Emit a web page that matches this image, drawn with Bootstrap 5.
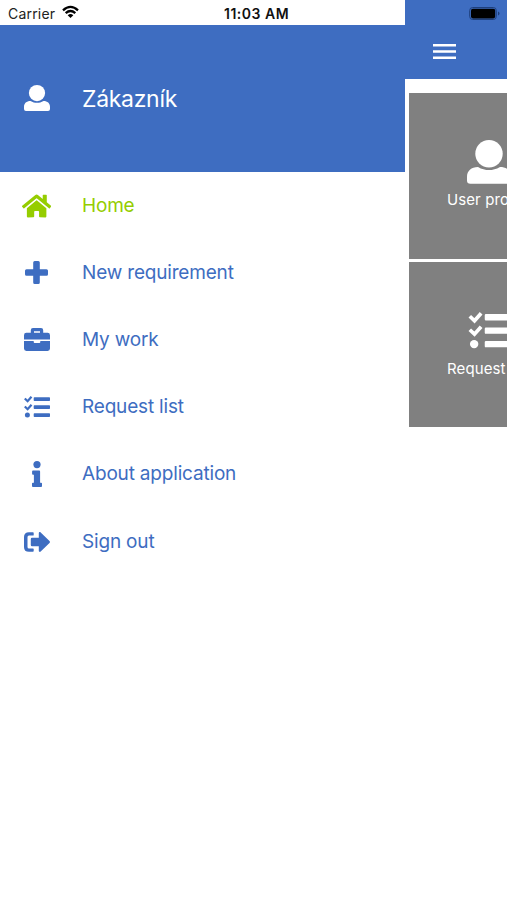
<!DOCTYPE html>
<html lang="en">
<head>
<meta charset="utf-8">
<meta name="viewport" content="width=device-width, initial-scale=1">
<title>Home</title>
<link href="https://cdn.jsdelivr.net/npm/bootstrap@5.3.0/dist/css/bootstrap.min.css" rel="stylesheet">
<style>
:root { --brand: #3e6dc1; --active: #95cd00; }
body { font-family: Inter, "Liberation Sans", sans-serif; background: #fff; }
svg { display: block; fill: currentColor; flex: none; }
.drawer { width: 405px; }
.status { height: 25px; padding: 4px 0 0 8px; font-size: 14px; line-height: 20px; color: #222; }
.clock { width: 66px; font-size: 14px; letter-spacing: .5px; margin-right: 115px; color: #111; }
.carrier { letter-spacing: .2px; }
.wifi { fill: none; margin: 1px 0 0 6px; }
.brand { background: var(--brand); }
.profile { height: 146.5px; padding-left: 22px; font-size: 23px; letter-spacing: -.3px; }
.profile-name { padding-top: 2px; }
.icon-slot { width: 29.5px; margin-right: 30.5px; display: flex; justify-content: center; }
.menu-row { height: 67.2px; padding: 1px 0 0 22px; font-size: 19px; line-height: 24px; letter-spacing: -.18px; color: var(--brand); text-decoration: none; }
.menu-row.current { color: var(--active); }
.topbar { height: 79px; }
.battery { padding: 7px 0 0 64px; height: 43px; }
.burger { margin-left: 28px; }
.tiles { padding: 14px 0 0 4px; gap: 3px; }
.tile { width: 160px; height: 165.5px; background: #808080; font-size: 15px; line-height: 20px; letter-spacing: .1px; padding-top: 47px; }
.tile-label { margin: 6px 0 0 38px; }
.tile svg { margin-left: 58px; }
</style>
</head>
<body class="vh-100 overflow-hidden">
<svg width="0" height="0" class="position-absolute" aria-hidden="true">
  <symbol id="user" viewBox="0 0 26 26"><circle cx="13" cy="8.100" r="8.100"/><path d="M6.500 15.900C8.700 17.200 10.800 17.700 13 17.700s4.300-.5 6.500-1.800c4 0 6.500 2.300 6.500 5.900V24Q26 25.900 24 25.900H2Q0 25.900 0 24V21.800C0 18.200 2.500 15.900 6.500 15.900z"/></symbol>
  <symbol id="tasks" viewBox="0 0 26 22"><path d="M10.400 1.200h14.900q.7 0 .7.700v2.400q0 .7-.7.700H10.400q-.7 0-.7-.7V1.900q0-.7.7-.7zM10.400 9.200h14.900q.7 0 .7.700v2.400q0 .7-.7.700H10.400q-.7 0-.7-.7V9.900q0-.7.7-.7zM10.400 17.200h14.900q.7 0 .7.700v2.400q0 .7-.7.700H10.400q-.7 0-.7-.7v-2.400q0-.7.7-.7z"/><circle cx="3.400" cy="19.100" r="2.500"/><path d="M1.600 3.300l2 1.900 3.200-3.600M1.600 11.300l2 1.900 3.200-3.600" fill="none" stroke="currentColor" stroke-width="2.200" stroke-linecap="square"/></symbol>
</svg>
<div class="d-flex h-100">
  <aside class="drawer flex-shrink-0">
    <div class="status d-flex">
      <span class="carrier">Carrier</span>
      <svg class="wifi" width="19" height="15" viewBox="0 0 19 15" stroke="#000" stroke-width="2.300"><path d="M2 5.300Q9.500-1.500 17 5.300M4.700 8.100Q9.500 3.800 14.300 8.100"/><path d="M6.700 10.300Q9.500 7.700 12.300 10.300L9.500 13z" fill="#000" stroke="none"/></svg>
      <span class="clock fw-semibold ms-auto text-nowrap">11:03 AM</span>
    </div>
    <header class="profile brand d-flex align-items-center text-white">
      <span class="icon-slot"><svg width="26" height="26"><use href="#user"/></svg></span>
      <span class="profile-name">Zákazník</span>
    </header>
    <nav>
      <a class="menu-row current d-flex align-items-center" href="#"><span class="icon-slot"><svg width="29.250" height="26" viewBox="0 0 576 512"><path d="M280.370 148.260L96 300.110V464a16 16 0 0 0 16 16l112.060-.29a16 16 0 0 0 15.920-16V368a16 16 0 0 1 16-16h64a16 16 0 0 1 16 16v95.640a16 16 0 0 0 16 16.050L464 480a16 16 0 0 0 16-16V300L295.670 148.260a12.190 12.190 0 0 0-15.300 0zM571.600 251.470L488 182.560V44.050a12 12 0 0 0-12-12h-56a12 12 0 0 0-12 12v72.610L318.470 43a48 48 0 0 0-61 0L4.340 251.470a12 12 0 0 0-1.600 16.900l25.500 31A12 12 0 0 0 45.150 301l235.220-193.740a12.190 12.190 0 0 1 15.300 0L530.900 301a12 12 0 0 0 16.900-1.600l25.500-31a12 12 0 0 0-1.700-16.930z"/></svg></span>Home</a>
      <a class="menu-row d-flex align-items-center" href="#"><span class="icon-slot"><svg width="23" height="23" viewBox="0 0 23 23"><path d="M9.700 0h3.600q1.500 0 1.500 1.500v6.700h6.700q1.500 0 1.500 1.500v3.600q0 1.500-1.500 1.500h-6.700v6.700q0 1.500-1.500 1.500H9.700q-1.500 0-1.500-1.500v-6.700H1.500Q0 14.800 0 13.300V9.700q0-1.500 1.500-1.500h6.700V1.500Q8.200 0 9.700 0z"/></svg></span>New requirement</a>
      <a class="menu-row d-flex align-items-center" href="#"><span class="icon-slot"><svg width="26" height="23" viewBox="0 0 26 23"><path fill-rule="evenodd" d="M9 0h8q2.200 0 2.200 2.200v2.600h4.400Q26 4.800 26 7.200v4.300H0V7.200Q0 4.800 2.400 4.800h4.400V2.200Q6.800 0 9 0zm1 3.200v1.600h6V3.200zM0 13h9.700v1.100q0 .9.900.9h4.800q.9 0 .9-.9V13H26v7.600q0 2.400-2.400 2.400H2.400Q0 23 0 20.600z"/></svg></span>My work</a>
      <a class="menu-row d-flex align-items-center" href="#"><span class="icon-slot"><svg width="26" height="22"><use href="#tasks"/></svg></span>Request list</a>
      <a class="menu-row d-flex align-items-center" href="#"><span class="icon-slot"><svg width="10" height="26" viewBox="0 0 10 26"><circle cx="5" cy="3.600" r="3.600"/><path d="M1 9.500h6.200q.9 0 .9.900v11.300h1q.9 0 .9.900v2.500q0 .9-.9.900H.9q-.9 0-.9-.9v-2.500q0-.9.9-.9h1v-8H1q-.9 0-.9-.9v-2.400q0-.9.900-.9z"/></svg></span>About application</a>
      <a class="menu-row d-flex align-items-center" href="#"><span class="icon-slot"><svg width="26" height="20" viewBox="0 0 26 20"><path d="M25.500 9.100l-8.800-8.600C15.900-.3 14.800.2 14.800 1.300v4.500H8q-1.200 0-1.200 1.200v6q0 1.200 1.200 1.200h6.800v4.500c0 1.100 1.200 1.600 1.900.8l8.800-8.600q.9-.9 0-1.800zM9.700 19.100v-2q0-.7-.7-.7H5q-1.500 0-1.500-1.500V5.100q0-1.500 1.500-1.500h4q.7 0 .7-.7v-2Q9.700.3 9 .3H5Q0 .3 0 5.100v9.800q0 4.900 5 4.900h4q.7 0 .7-.7z"/></svg></span>Sign out</a>
    </nav>
  </aside>
  <main class="flex-grow-1 overflow-hidden">
    <div class="topbar brand text-white">
      <div class="battery"><svg width="32" height="13" viewBox="0 0 32 13"><rect x=".7" y=".5" width="26.600" height="12" rx="3" fill="none" stroke="#1e3f7c"/><rect x="2" y="1.700" width="24.200" height="9.700" rx="1.800" fill="#000"/><path d="M29 4.600q1.500.5 1.500 1.900T29 8.400z" fill="#1e3f7c"/></svg></div>
      <svg class="burger" width="23" height="17" viewBox="0 0 23 17"><path d="M0 1h23v2.600H0zM0 7.200h23v2.600H0zM0 13.400h23V16H0z"/></svg>
    </div>
    <div class="tiles d-flex flex-column">
      <div class="tile text-white"><svg width="44" height="44"><use href="#user"/></svg><div class="tile-label">User profile</div></div>
      <div class="tile text-white"><svg width="45" height="44" viewBox="0 0 45 44"><use href="#tasks" width="45" height="37" x="0.800" y="3"/></svg><div class="tile-label">Request list</div></div>
    </div>
  </main>
</div>
<script src="https://cdn.jsdelivr.net/npm/bootstrap@5.3.0/dist/js/bootstrap.bundle.min.js"></script>
</body>
</html>
